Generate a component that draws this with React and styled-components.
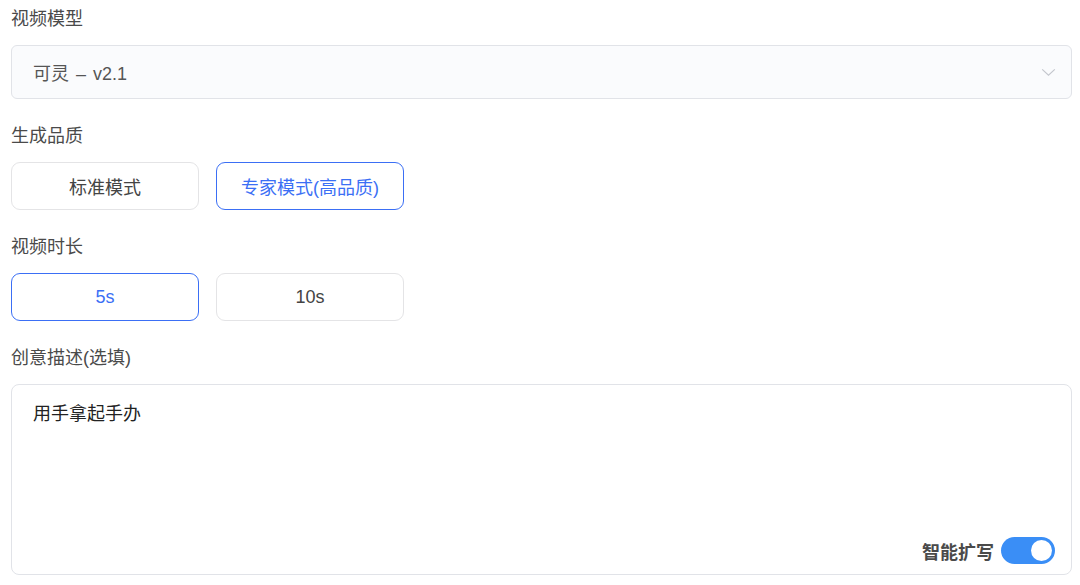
import React, { useState } from "react";
import styled, { createGlobalStyle } from "styled-components";

const GlobalStyle = createGlobalStyle`
  html, body {
    margin: 0;
    padding: 0;
    background: #ffffff;
  }
  body {
    font-family: "Liberation Sans", "Noto Sans CJK SC", sans-serif;
    -webkit-font-smoothing: antialiased;
  }
`;

export default function App() {
	const [quality, setQuality] = useState("pro");
	const [duration, setDuration] = useState("5s");
	const [expand, setExpand] = useState(true);

	return (
		<>
			<GlobalStyle />
			<Form>
				<Field>
					<Label>视频模型</Label>
					<Select>
						<SelectValue>可灵 – v2.1</SelectValue>
						<Chevron viewBox="0 0 16 10" aria-hidden="true">
							<path d="M1 1.5 L8 8 L15 1.5" fill="none" stroke="#c3c6cd" strokeWidth="1.3" />
						</Chevron>
					</Select>
				</Field>

				<Field>
					<Label>生成品质</Label>
					<OptionRow>
						<Option $active={quality === "std"} onClick={() => setQuality("std")}>
							标准模式
						</Option>
						<Option $active={quality === "pro"} onClick={() => setQuality("pro")}>
							专家模式(高品质)
						</Option>
					</OptionRow>
				</Field>

				<Field>
					<Label>视频时长</Label>
					<OptionRow>
						<Option $active={duration === "5s"} onClick={() => setDuration("5s")}>
							5s
						</Option>
						<Option $active={duration === "10s"} onClick={() => setDuration("10s")}>
							10s
						</Option>
					</OptionRow>
				</Field>

				<Field>
					<Label>创意描述(选填)</Label>
					<PromptBox>
						<PromptText>用手拿起手办</PromptText>
						<PromptFooter>
							<ExpandLabel>智能扩写</ExpandLabel>
							<Switch $on={expand} onClick={() => setExpand(!expand)} />
						</PromptFooter>
					</PromptBox>
				</Field>
			</Form>
		</>
	);
}

const Form = styled.div`
  width: 1061px;
  padding: 7px 0 0 11px;
  display: flex;
  flex-direction: column;
  gap: 25px;
`;

const Field = styled.div`
  display: flex;
  flex-direction: column;
  gap: 14px;
`;

const Label = styled.div`
  font-size: 18px;
  line-height: 24px;
  color: #4a4a4a;
`;

const Select = styled.div`
  height: 54px;
  box-sizing: border-box;
  border: 1px solid #e1e3e8;
  border-radius: 6px;
  background: #fafbfd;
  display: flex;
  align-items: center;
  justify-content: space-between;
  padding: 0 15px 0 21px;
`;

const SelectValue = styled.span`
  font-size: 18px;
  color: #555555;
  word-spacing: 2px;
`;

const Chevron = styled.svg`
  width: 15px;
  height: 9px;
`;

const OptionRow = styled.div`
  display: flex;
  gap: 17px;
`;

const Option = styled.button`
  width: 188px;
  height: 48px;
  box-sizing: border-box;
  border-radius: 9px;
  background: #ffffff;
  border: ${(p) => (p.$active ? "1.5px solid #3b6ff5" : "1.5px solid #e4e4e6")};
  color: ${(p) => (p.$active ? "#3b6ff5" : "#444444")};
  font-family: inherit;
  font-size: 18px;
  cursor: pointer;
  padding: 0;
`;

const PromptBox = styled.div`
  height: 191px;
  box-sizing: border-box;
  border: 1px solid #e1e3e8;
  border-radius: 8px;
  background: #ffffff;
  padding: 17px 16px 10px 21px;
  display: flex;
  flex-direction: column;
  justify-content: space-between;
`;

const PromptText = styled.div`
  font-size: 18px;
  line-height: 24px;
  color: #222222;
`;

const PromptFooter = styled.div`
  display: flex;
  justify-content: flex-end;
  align-items: center;
  gap: 7px;
`;

const ExpandLabel = styled.span`
  font-size: 18px;
  font-weight: 700;
  color: #4a4a4a;
`;

const Switch = styled.button`
  position: relative;
  width: 54px;
  height: 27px;
  border: 0;
  padding: 0;
  border-radius: 14px;
  background: ${(p) => (p.$on ? "#3a8ef6" : "#d0d3d9")};
  cursor: pointer;

  &::after {
    content: "";
    position: absolute;
    top: 3px;
    left: ${(p) => (p.$on ? "30px" : "3px")};
    width: 21px;
    height: 21px;
    border-radius: 50%;
    background: #ffffff;
  }
`;
